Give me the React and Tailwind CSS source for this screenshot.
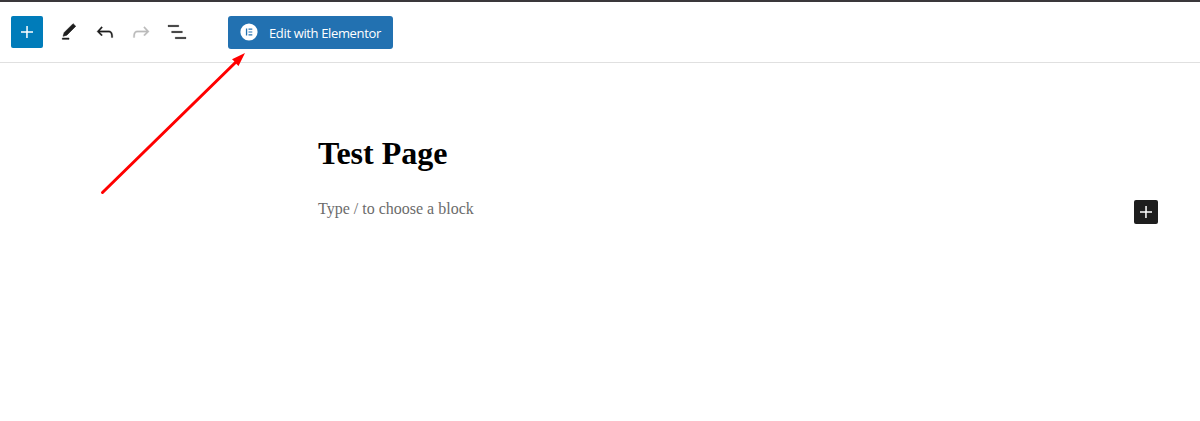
const icons = {
  plus: 'M18 11.2h-5.2V6h-1.5v5.2H6v1.5h5.2V18h1.5v-5.2H18z',
  edit: 'M20.1 5.1L16.9 2 6.2 12.7l-1.3 4.4 4.5-1.3L20.1 5.1zM4 20.8h8v-1.5H4v1.5z',
  undo: 'M18.3 11.7c-.6-.6-1.4-.9-2.3-.9H6.7l2.9-3.3-1.1-1-4.5 5L8.5 16l1-1-2.7-2.7H16c.5 0 .9.2 1.3.5 1 1 1 3.4 1 4.5v.3h1.5v-.2c0-1.5 0-4.3-1.5-5.7z',
  redo: 'M15.6 6.5l-1.1 1 2.9 3.3H8c-.9 0-1.7.3-2.3.9-1.4 1.5-1.4 4.2-1.4 5.6v.2h1.5v-.3c0-1.1 0-3.5 1-4.5.3-.3.7-.5 1.3-.5h9.2L14.5 15l1.1 1.1 4.6-4.6-4.6-5z',
  list: 'M13.8 5.2H3v1.5h10.8V5.2zm-3.6 12v1.5H21v-1.5H10.2zm7.2-6H6.6v1.5h10.8v-1.5z',
};

function Icon({ name, className = 'size-6' }) {
  return (
    <svg viewBox="0 0 24 24" fill="currentColor" className={className} aria-hidden="true">
      <path d={icons[name]} />
    </svg>
  );
}

function ToolButton({ name, className = 'text-[#1e1e1e]', iconClass = 'size-6 stroke-current stroke-[0.25]' }) {
  return (
    <button type="button" aria-label={name} className={`flex h-8 w-9 shrink-0 items-center justify-center ${className}`}>
      <Icon name={name} className={iconClass} />
    </button>
  );
}

function Toolbar() {
  return (
    <header className="flex h-[63px] items-start border-t-2 border-b border-t-[#3a383b] border-b-[#e0e0e0] pt-[14px] pl-[11px]">
      <button type="button" aria-label="Add block" className="flex size-8 items-center justify-center rounded-[2px] bg-[#007cba] text-white">
        <Icon name="plus" />
      </button>
      <div className="ml-2 flex">
        <ToolButton name="edit" iconClass="size-5 stroke-current stroke-[0.7]" />
        <ToolButton name="undo" />
        <ToolButton name="redo" className="text-[#bbbbbb]" />
        <ToolButton name="list" />
      </div>
      <button type="button" className="ml-[33px] flex h-[33px] w-[165px] items-center rounded-[3px] bg-[#2271b1] pl-3 text-white">
        <svg viewBox="0 0 18 18" className="mb-px size-[18px] shrink-0" aria-hidden="true">
          <circle cx="9" cy="9" r="8.6" fill="#fff" />
          <path d="M5.9 5.6h1.3v6.8H5.9zM8.5 5.6h3.8v1.2H8.5zM8.5 8.4h3.8v1.2H8.5zM8.5 11.2h3.8v1.2H8.5z" fill="#2271b1" />
        </svg>
        <span className="ml-[11px] font-['Open_Sans','Noto_Sans',sans-serif] text-[13px] leading-5 tracking-[-0.36px] whitespace-nowrap">
          Edit with Elementor
        </span>
      </button>
    </header>
  );
}

function Arrow() {
  return (
    <svg viewBox="0 0 150 150" className="pointer-events-none absolute top-[50px] left-[98px] size-[150px]" aria-hidden="true">
      <path d="M4.5 142.5L139 11" stroke="#ff0000" strokeWidth="3" strokeLinecap="round" />
      <path d="M147 3L134 9.3L136.5 11.5L138 13.5L140.5 16Z" fill="#ff0000" />
    </svg>
  );
}

export default function App() {
  return (
    <div className="relative h-[421px] overflow-hidden bg-white">
      <Toolbar />
      <main className="pr-[42px] pl-[318px] font-['Liberation_Serif',serif]">
        <h1 className="pt-[72px] text-[32px] leading-9 font-bold text-black">Test Page</h1>
        <div className="mt-[29px] flex items-start justify-between">
          <p className="text-[16px] leading-[18px] text-[#6b6b6b]">Type / to choose a block</p>
          <button type="button" aria-label="Add block" className="flex size-6 items-center justify-center rounded-[2px] bg-[#1e1e1e] text-white">
            <Icon name="plus" />
          </button>
        </div>
      </main>
      <Arrow />
    </div>
  );
}
